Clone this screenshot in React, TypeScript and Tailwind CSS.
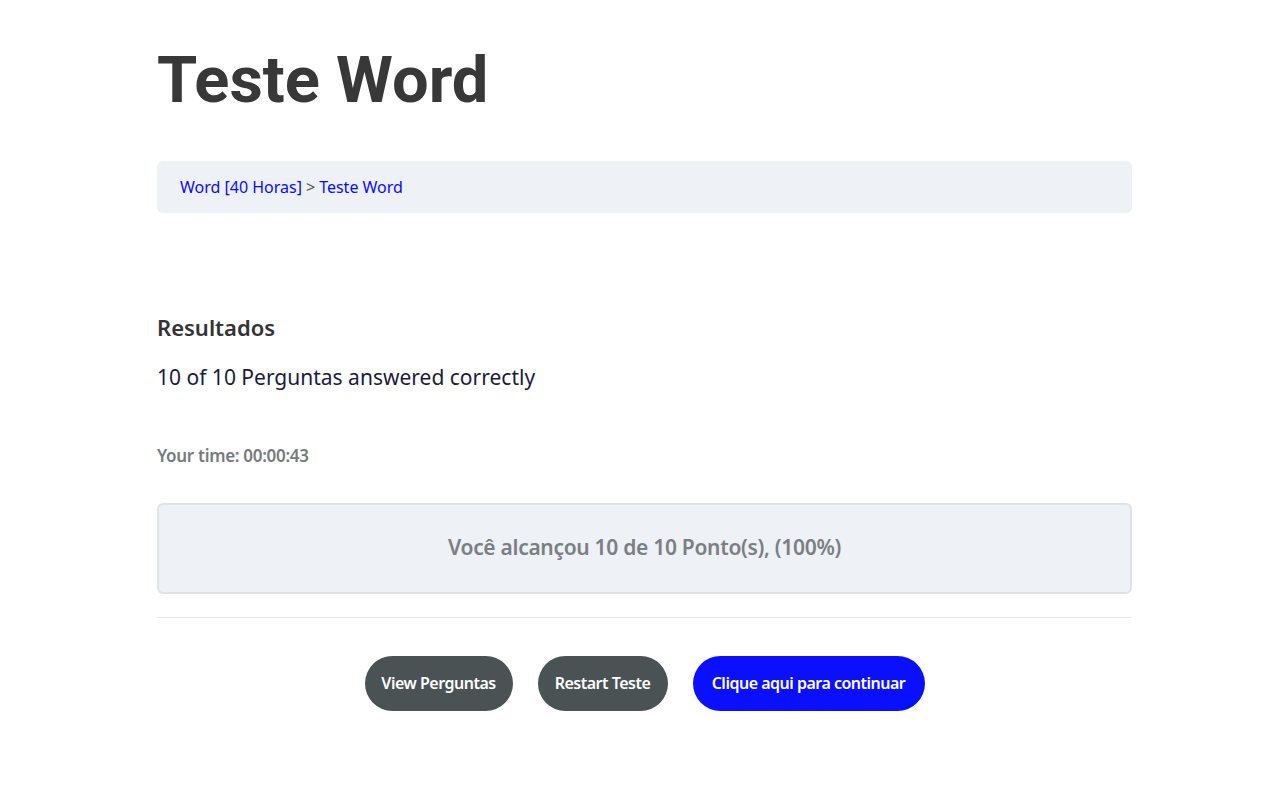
export default function App() {
  return (
    <div className="min-h-screen bg-white font-['Noto_Sans',sans-serif]">
      <div className="ml-[157px] w-[975px] pt-[38px]">
        <h1 className="font-['Roboto',sans-serif] text-[65px] font-bold leading-[84px] text-[#383838]">
          Teste Word
        </h1>

        <nav className="mt-[39px] flex h-[52px] items-center rounded-md bg-[#eef1f5] px-[23px] text-[16px]">
          <a href="#" className="text-[#0b0bff]">Word [40 Horas]</a>
          <span className="mx-[4px] text-[#555]">&gt;</span>
          <a href="#" className="text-[#0b0bff]">Teste Word</a>
        </nav>

        <section className="mt-[99px]">
          <h2 className="text-[22px] font-semibold leading-[30px] text-[#333]">Resultados</h2>
          <p className="mt-[20px] text-[21px] leading-[30px] text-[#1c1a3d]">
            10 of 10 Perguntas answered correctly
          </p>
          <p className="mt-[51px] text-[17px] font-semibold tracking-[-0.3px] text-[#777b7e]">
            Your time: 00:00:43
          </p>

          <div className="mt-[34px] flex h-[91px] items-center justify-center rounded-md border-2 border-[#dfe3e8] bg-[#eef1f5]">
            <span className="text-[21px] font-semibold tracking-[-0.3px] text-[#7a7f84]">
              Você alcançou 10 de 10 Ponto(s), (100%)
            </span>
          </div>

          <hr className="mt-[23px] border-t border-[#e6e8eb]" />

          <div className="mt-[38px] flex justify-center gap-[25px]">
            <button className="h-[55px] w-[148px] rounded-full bg-[#4a5254] text-[16px] font-semibold tracking-[-0.5px] text-white">
              View Perguntas
            </button>
            <button className="h-[55px] w-[130px] rounded-full bg-[#4a5254] text-[16px] font-semibold tracking-[-0.5px] text-white">
              Restart Teste
            </button>
            <button className="h-[55px] w-[232px] rounded-full bg-[#0a10ff] text-[16px] font-semibold tracking-[-0.5px] text-white">
              Clique aqui para continuar
            </button>
          </div>
        </section>
      </div>
    </div>
  )
}
